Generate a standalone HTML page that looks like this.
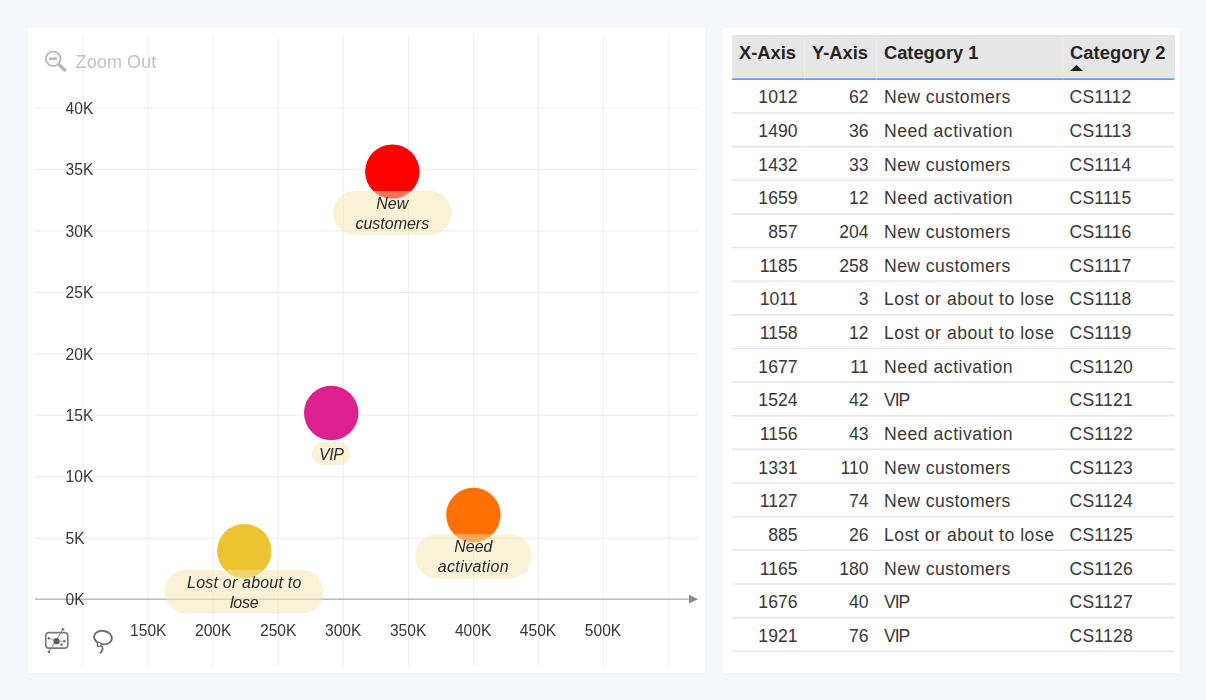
<!DOCTYPE html>
<html lang="en"><head><meta charset="utf-8"><title>Scatter chart</title>
<style>
html,body{margin:0;padding:0;}
body{width:1206px;height:700px;background:#f4f6fa;position:relative;overflow:hidden;font-family:"Liberation Sans",sans-serif;}
.panel{position:absolute;background:#fff;top:28px;height:645px;}
#chart{left:28px;width:677px;}
#tbl{left:723px;width:456px;}
svg{position:absolute;left:0;top:0;}
svg text{font-family:"Liberation Sans",sans-serif;}
.ax{font-size:15.6px;fill:#383838;}
.lab{font-size:16px;font-style:italic;fill:#2b2b2b;text-anchor:middle;}
.hdr{position:absolute;left:9px;top:7px;width:442.5px;height:43px;background:#e6e6e6;}
.hdr div{position:absolute;top:0;height:43px;box-sizing:border-box;font-weight:bold;font-size:18.3px;color:#252423;line-height:20px;padding-top:8px;white-space:nowrap;}
.row{position:absolute;left:9px;width:442.5px;height:33.66px;box-sizing:border-box;font-size:17.6px;color:#383838;line-height:33px;}
.row span{position:absolute;top:2.1px;white-space:nowrap;}
.nc{letter-spacing:0.42px}.na{letter-spacing:0.52px}.lo{letter-spacing:0.53px}.vip{letter-spacing:-1.1px}
.c1{left:0;width:65.5px;text-align:right;}
.c2{left:72px;width:64.5px;text-align:right;}
.c3{left:152px;}
.c4{left:337.5px;letter-spacing:0.18px}
</style></head>
<body>
<div class="panel" id="chart">
<svg width="677" height="645" viewBox="28 28 677 645" style="will-change:transform">
<line x1="82.9" y1="35" x2="82.9" y2="666" stroke="#eeeeee" stroke-width="1"/>
<line x1="148.0" y1="35" x2="148.0" y2="666" stroke="#eeeeee" stroke-width="1"/>
<line x1="213.1" y1="35" x2="213.1" y2="666" stroke="#eeeeee" stroke-width="1"/>
<line x1="278.2" y1="35" x2="278.2" y2="666" stroke="#eeeeee" stroke-width="1"/>
<line x1="343.3" y1="35" x2="343.3" y2="666" stroke="#eeeeee" stroke-width="1"/>
<line x1="408.4" y1="35" x2="408.4" y2="666" stroke="#eeeeee" stroke-width="1"/>
<line x1="473.5" y1="35" x2="473.5" y2="666" stroke="#eeeeee" stroke-width="1"/>
<line x1="538.6" y1="35" x2="538.6" y2="666" stroke="#eeeeee" stroke-width="1"/>
<line x1="603.7" y1="35" x2="603.7" y2="666" stroke="#eeeeee" stroke-width="1"/>
<line x1="668.8" y1="35" x2="668.8" y2="666" stroke="#eeeeee" stroke-width="1"/>
<line x1="35" y1="108.0" x2="698" y2="108.0" stroke="#e9ebf0" stroke-width="1"/>
<line x1="35" y1="169.4" x2="698" y2="169.4" stroke="#e9ebf0" stroke-width="1"/>
<line x1="35" y1="230.9" x2="698" y2="230.9" stroke="#e9ebf0" stroke-width="1"/>
<line x1="35" y1="292.4" x2="698" y2="292.4" stroke="#e9ebf0" stroke-width="1"/>
<line x1="35" y1="353.8" x2="698" y2="353.8" stroke="#e9ebf0" stroke-width="1"/>
<line x1="35" y1="415.2" x2="698" y2="415.2" stroke="#e9ebf0" stroke-width="1"/>
<line x1="35" y1="476.7" x2="698" y2="476.7" stroke="#e9ebf0" stroke-width="1"/>
<line x1="35" y1="538.2" x2="698" y2="538.2" stroke="#e9ebf0" stroke-width="1"/>
<line x1="35" y1="599.6" x2="698" y2="599.6" stroke="#e9ebf0" stroke-width="1"/>
<line x1="35" y1="599.3" x2="690" y2="599.3" stroke="#bababa" stroke-width="1.5"/>
<path d="M689 594.8 L698 599.2 L689 603.6 Z" fill="#8a8a8a"/>
<text class="ax" x="65.6" y="113.7">40K</text>
<text class="ax" x="65.6" y="175.1">35K</text>
<text class="ax" x="65.6" y="236.6">30K</text>
<text class="ax" x="65.6" y="298.1">25K</text>
<text class="ax" x="65.6" y="359.5">20K</text>
<text class="ax" x="65.6" y="420.9">15K</text>
<text class="ax" x="65.6" y="482.4">10K</text>
<text class="ax" x="65.6" y="543.9">5K</text>
<text class="ax" x="65.6" y="605.3">0K</text>
<text class="ax" x="148.3" y="635.6" text-anchor="middle">150K</text>
<text class="ax" x="213.2" y="635.6" text-anchor="middle">200K</text>
<text class="ax" x="278.2" y="635.6" text-anchor="middle">250K</text>
<text class="ax" x="343.2" y="635.6" text-anchor="middle">300K</text>
<text class="ax" x="408.1" y="635.6" text-anchor="middle">350K</text>
<text class="ax" x="473.1" y="635.6" text-anchor="middle">400K</text>
<text class="ax" x="538.0" y="635.6" text-anchor="middle">450K</text>
<text class="ax" x="603.0" y="635.6" text-anchor="middle">500K</text>
<g stroke="#b6b6b6" fill="none"><circle cx="53.2" cy="58.8" r="7.3" stroke-width="1.7"/><line x1="49" y1="58.7" x2="57" y2="58.7" stroke-width="2.4"/><line x1="58.6" y1="64.4" x2="65.8" y2="71" stroke-width="3.3"/></g>
<text x="75.6" y="67.5" font-size="18" letter-spacing="0.1" fill="#c2c2c2">Zoom Out</text>
<circle cx="392.3" cy="171.6" r="27.2" fill="#ff0000"/>
<circle cx="331.2" cy="413" r="27.2" fill="#de1f8f"/>
<circle cx="473.4" cy="515" r="27.2" fill="#ff7005"/>
<circle cx="244.3" cy="551.1" r="27.2" fill="#ecc331"/>
<rect x="333.2" y="190.9" width="118.3" height="44.1" rx="22.0" fill="rgba(245,229,174,0.5)"/>
<text class="lab" x="392.3" y="208.9">New</text><text class="lab" x="392.3" y="229">customers</text>
<rect x="311.8" y="442" width="38.6" height="23.2" rx="11.6" fill="rgba(245,229,174,0.5)"/>
<text class="lab" x="331.2" y="459.5" letter-spacing="-0.4">VIP</text>
<rect x="415.2" y="534.3" width="116.7" height="44.1" rx="22.1" fill="rgba(245,229,174,0.5)"/>
<text class="lab" x="473.4" y="552">Need</text><text class="lab" x="473.4" y="572" letter-spacing="0.38">activation</text>
<rect x="164.5" y="569.8" width="159.2" height="43.8" rx="21.9" fill="rgba(245,229,174,0.5)"/>
<text class="lab" x="244.3" y="587.6" letter-spacing="0.2">Lost or about to</text><text class="lab" x="244.3" y="607.5" letter-spacing="-0.2">lose</text>
<g stroke="#7c7c7c" fill="none" stroke-width="1.6">
<rect x="45.8" y="632.6" width="22" height="15.5" rx="3.2"/>
<line x1="48.9" y1="651.8" x2="62.9" y2="629.4" stroke-width="0.9"/>
<line x1="48.9" y1="638.2" x2="56.5" y2="641.2" stroke-width="0.7"/>
<line x1="56.5" y1="641.2" x2="64.4" y2="641.2" stroke-width="0.7"/>
<line x1="56.5" y1="641.2" x2="61.6" y2="644.7" stroke-width="0.7"/>
</g>
<g fill="#6e6e6e"><circle cx="56.5" cy="641.2" r="3.1" fill="#5e5e5e"/><circle cx="62.9" cy="629.3" r="1.3"/><circle cx="48.9" cy="651.8" r="1.3"/><circle cx="48.9" cy="638.2" r="1.2"/><circle cx="64.4" cy="641.2" r="1.2"/><circle cx="61.6" cy="644.7" r="1.2"/></g>
<g stroke="#707070" fill="none" stroke-width="1.9">
<ellipse cx="103" cy="637.6" rx="9" ry="6.7" transform="rotate(9 103 637.6)"/>
<circle cx="99.3" cy="644.4" r="2" stroke-width="1.4" fill="#fff"/>
<path d="M101.6 645.6 C103.2 648 102.6 651 99.8 653.4" stroke-width="1.7"/>
</g>
</svg>
</div>
<div class="panel" id="tbl">
<div class="hdr"><div style="left:0;width:72px;padding-left:7px;">X-Axis</div><div style="left:72px;width:72px;padding-left:8px;">Y-Axis</div><div style="left:144px;width:187px;padding-left:8px;">Category 1</div><div style="left:331px;width:111.5px;padding-left:7px;border-right:none;letter-spacing:0.1px">Category 2<svg width="13" height="6" style="left:7px;top:30px" viewBox="0 0 13 6"><path d="M0 6 L6.5 0 L13 6 Z" fill="#252423"/></svg></div></div>
<div class="row" style="top:51.30px"><span class="c1">1012</span><span class="c2">62</span><span class="c3 nc">New customers</span><span class="c4">CS1112</span></div>
<div class="row" style="top:84.96px"><span class="c1">1490</span><span class="c2">36</span><span class="c3 na">Need activation</span><span class="c4">CS1113</span></div>
<div class="row" style="top:118.62px"><span class="c1">1432</span><span class="c2">33</span><span class="c3 nc">New customers</span><span class="c4">CS1114</span></div>
<div class="row" style="top:152.28px"><span class="c1">1659</span><span class="c2">12</span><span class="c3 na">Need activation</span><span class="c4">CS1115</span></div>
<div class="row" style="top:185.94px"><span class="c1">857</span><span class="c2">204</span><span class="c3 nc">New customers</span><span class="c4">CS1116</span></div>
<div class="row" style="top:219.60px"><span class="c1">1185</span><span class="c2">258</span><span class="c3 nc">New customers</span><span class="c4">CS1117</span></div>
<div class="row" style="top:253.26px"><span class="c1">1011</span><span class="c2">3</span><span class="c3 lo">Lost or about to lose</span><span class="c4">CS1118</span></div>
<div class="row" style="top:286.92px"><span class="c1">1158</span><span class="c2">12</span><span class="c3 lo">Lost or about to lose</span><span class="c4">CS1119</span></div>
<div class="row" style="top:320.58px"><span class="c1">1677</span><span class="c2">11</span><span class="c3 na">Need activation</span><span class="c4">CS1120</span></div>
<div class="row" style="top:354.24px"><span class="c1">1524</span><span class="c2">42</span><span class="c3 vip">VIP</span><span class="c4">CS1121</span></div>
<div class="row" style="top:387.90px"><span class="c1">1156</span><span class="c2">43</span><span class="c3 na">Need activation</span><span class="c4">CS1122</span></div>
<div class="row" style="top:421.56px"><span class="c1">1331</span><span class="c2">110</span><span class="c3 nc">New customers</span><span class="c4">CS1123</span></div>
<div class="row" style="top:455.22px"><span class="c1">1127</span><span class="c2">74</span><span class="c3 nc">New customers</span><span class="c4">CS1124</span></div>
<div class="row" style="top:488.88px"><span class="c1">885</span><span class="c2">26</span><span class="c3 lo">Lost or about to lose</span><span class="c4">CS1125</span></div>
<div class="row" style="top:522.54px"><span class="c1">1165</span><span class="c2">180</span><span class="c3 nc">New customers</span><span class="c4">CS1126</span></div>
<div class="row" style="top:556.20px"><span class="c1">1676</span><span class="c2">40</span><span class="c3 vip">VIP</span><span class="c4">CS1127</span></div>
<div class="row" style="top:589.86px"><span class="c1">1921</span><span class="c2">76</span><span class="c3 vip">VIP</span><span class="c4">CS1128</span></div>
<svg width="456" height="645" viewBox="723 28 456 645" style="z-index:2;pointer-events:none"><line x1="732" y1="113.00" x2="1174.5" y2="113.00" stroke="#e6e6e6" stroke-width="1.6"/><line x1="732" y1="146.64" x2="1174.5" y2="146.64" stroke="#e6e6e6" stroke-width="1.6"/><line x1="732" y1="180.28" x2="1174.5" y2="180.28" stroke="#e6e6e6" stroke-width="1.6"/><line x1="732" y1="213.92" x2="1174.5" y2="213.92" stroke="#e6e6e6" stroke-width="1.6"/><line x1="732" y1="247.56" x2="1174.5" y2="247.56" stroke="#e6e6e6" stroke-width="1.6"/><line x1="732" y1="281.20" x2="1174.5" y2="281.20" stroke="#e6e6e6" stroke-width="1.6"/><line x1="732" y1="314.84" x2="1174.5" y2="314.84" stroke="#e6e6e6" stroke-width="1.6"/><line x1="732" y1="348.48" x2="1174.5" y2="348.48" stroke="#e6e6e6" stroke-width="1.6"/><line x1="732" y1="382.12" x2="1174.5" y2="382.12" stroke="#e6e6e6" stroke-width="1.6"/><line x1="732" y1="415.76" x2="1174.5" y2="415.76" stroke="#e6e6e6" stroke-width="1.6"/><line x1="732" y1="449.40" x2="1174.5" y2="449.40" stroke="#e6e6e6" stroke-width="1.6"/><line x1="732" y1="483.04" x2="1174.5" y2="483.04" stroke="#e6e6e6" stroke-width="1.6"/><line x1="732" y1="516.68" x2="1174.5" y2="516.68" stroke="#e6e6e6" stroke-width="1.6"/><line x1="732" y1="550.32" x2="1174.5" y2="550.32" stroke="#e6e6e6" stroke-width="1.6"/><line x1="732" y1="583.96" x2="1174.5" y2="583.96" stroke="#e6e6e6" stroke-width="1.6"/><line x1="732" y1="617.60" x2="1174.5" y2="617.60" stroke="#e6e6e6" stroke-width="1.6"/><line x1="732" y1="651.24" x2="1174.5" y2="651.24" stroke="#e6e6e6" stroke-width="1.6"/><line x1="732" y1="79.2" x2="1174.5" y2="79.2" stroke="#4aa7fa" stroke-width="1.7"/><line x1="804.4" y1="35" x2="804.4" y2="652" stroke="#ffffff" stroke-opacity="0.3" stroke-width="1"/><line x1="876.4" y1="35" x2="876.4" y2="652" stroke="#ffffff" stroke-opacity="0.3" stroke-width="1"/><line x1="1062.9" y1="35" x2="1062.9" y2="652" stroke="#ffffff" stroke-opacity="0.3" stroke-width="1"/></svg>
</div>
</body></html>
